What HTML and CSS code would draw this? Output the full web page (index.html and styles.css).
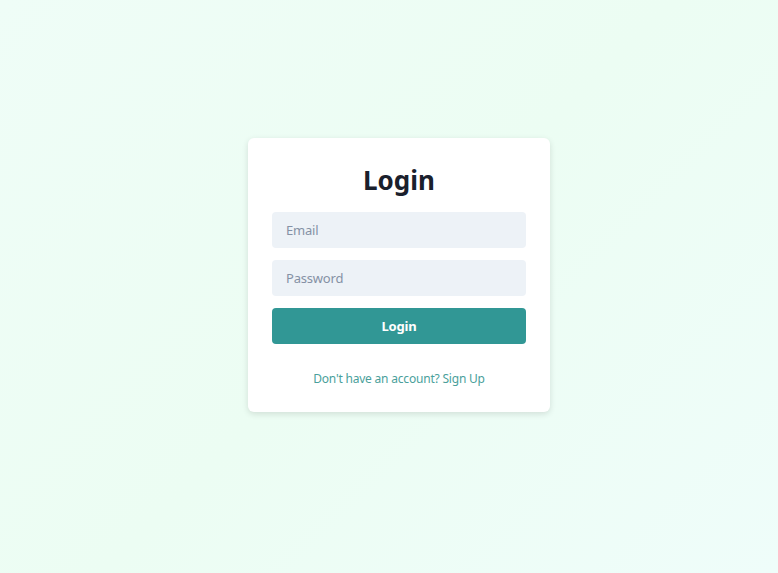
FILE: index.html
```html
<!DOCTYPE html>
<html lang="en">
<head>
<meta charset="utf-8">
<title>Login</title>
<link rel="stylesheet" href="styles.css">
</head>
<body>
<main class="page">
  <form class="card">
    <h1 class="title">Login</h1>
    <input class="field" type="email" placeholder="Email">
    <input class="field" type="password" placeholder="Password">
    <button class="btn" type="button">Login</button>
    <p class="alt"><a href="#">Don't have an account? Sign Up</a></p>
  </form>
</main>
</body>
</html>
```
FILE: styles.css
```css
html, body {
  margin: 0;
  height: 100%;
}
body {
  font-family: "Noto Sans", "Open Sans", sans-serif;
  background: linear-gradient(135deg, #effdf7 0%, #ecfdf3 50%, #effdfa 100%);
}
.page {
  min-height: 100%;
  display: flex;
  align-items: center;
  justify-content: center;
}
.card {
  width: 302px;
  box-sizing: border-box;
  padding: 24px 24px 23px;
  background: #fff;
  border-radius: 6px;
  box-shadow: 0 2px 6px rgba(0,0,0,0.12);
  display: flex;
  flex-direction: column;
  gap: 12px;
  margin: -24px 0 0 20px;
}
.title {
  margin: 0 0 2px;
  text-align: center;
  font-size: 26px;
  line-height: 36px;
  font-weight: 700;
  color: #1a202c;
}
.field {
  height: 36px;
  border: none;
  border-radius: 4px;
  background: #edf2f7;
  padding: 0 14px;
  font: inherit;
  font-size: 13px;
  letter-spacing: -0.2px;
  color: #2d3748;
  outline: none;
}
.field::placeholder {
  color: #8591a5;
}
.btn {
  height: 36px;
  border: none;
  border-radius: 4px;
  background: #319795;
  color: #fff;
  font: inherit;
  font-size: 13px;
  letter-spacing: -0.2px;
  font-weight: 700;
  cursor: pointer;
}
.alt {
  margin: 13px 0 0;
  text-align: center;
  font-size: 12px;
  letter-spacing: -0.2px;
  line-height: 20px;
}
.alt a {
  color: #4a9f9b;
  text-decoration: none;
}
```
